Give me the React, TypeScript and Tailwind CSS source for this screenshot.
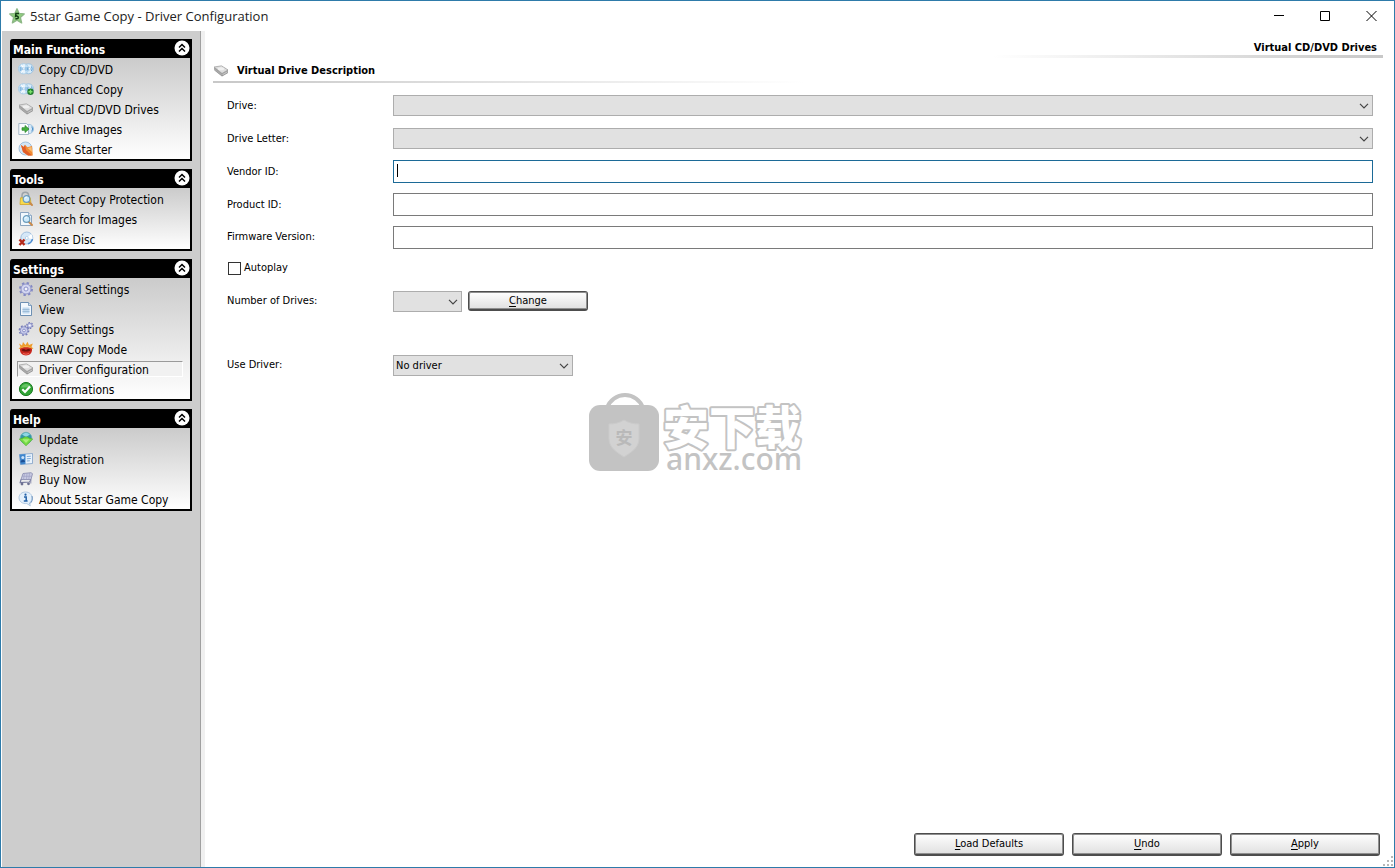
import { ReactNode, SelectHTMLAttributes } from "react";

type MenuItem = {
  label: string;
  icon: ReactNode;
  active?: boolean;
};

type MenuGroup = {
  title: string;
  items: MenuItem[];
};

function Icon({ children }: { children: ReactNode }) {
  return (
    <svg viewBox="0 0 16 16" className="h-4 w-4 shrink-0" aria-hidden="true">
      {children}
    </svg>
  );
}

function StarIcon() {
  return (
    <Icon>
      <path d="M8 .8l2 4.600 5.200.5-3.900 3.500 1.300 5.400L8 12.200l-4.600 2.600 1.300-5.400L.8 5.900 6 5.400z" fill="#8fd07c" stroke="#8db886" strokeWidth="1.400" strokeLinejoin="round" />
      <path d="M10 5.600H6.900L6.600 8.300c1.300-.5 2.700-.2 2.700 1.100s-1.400 1.700-2.900 1.100" fill="none" stroke="#123d14" strokeWidth="1.500" />
    </Icon>
  );
}

function DiscPair() {
  return (
    <>
      <circle cx="10.500" cy="7.800" r="5" fill="#d9ecf9" stroke="#8fbce0" strokeWidth=".8" />
      <circle cx="5.500" cy="7.800" r="5.200" fill="#c3e0f5" stroke="#a3c9e4" strokeWidth=".7" />
      <path d="M3.500 3.800l1.500 3M6 3.200v3.500M3.500 11.800L5 9M6 12.200V9" stroke="#fff" strokeWidth="1.200" />
      <path d="M2.300 6v4M4 6.300v3M8 6v3.800" stroke="#6eaadb" strokeWidth=".9" />
      <path d="M9.800 6.300v3M13.500 5.500a4.500 4.500 0 0 1 0 4.600" fill="none" stroke="#4c8fca" strokeWidth=".9" />
      <circle cx="5.800" cy="7.800" r="1.100" fill="#fff" stroke="#8fbce0" strokeWidth=".5" />
      <circle cx="11.500" cy="7.800" r="1.100" fill="#fff" stroke="#7fb2d8" strokeWidth=".5" />
    </>
  );
}

function CopyDiscIcon() {
  return (
    <Icon>
      <DiscPair />
    </Icon>
  );
}

function EnhancedCopyIcon() {
  return (
    <Icon>
      <DiscPair />
      <circle cx="12.500" cy="10.800" r="3.200" fill="#1f7a2c" />
      <path d="M12.500 8.800v4M10.500 10.800h4" stroke="#7be06a" strokeWidth="1.400" />
    </Icon>
  );
}

function DriveIcon() {
  return (
    <Icon>
      <path d="M1 4.300l7.500-1.300 6.500 4v3l-6 3.500L1.500 7.500z" fill="#8c8c8c" />
      <path d="M1 4l7.500-1.200L15 6.900l-6 3.500z" fill="#dedede" stroke="#a2a2a2" strokeWidth=".7" strokeLinejoin="round" />
      <path d="M1.200 4.800L9 11v2L2 7.500z" fill="#a9a9a9" />
      <path d="M9.300 11l5.300-3.100v1.700l-5.300 3z" fill="#c4c4c4" />
      <ellipse cx="8" cy="5.800" rx="3.200" ry="1.500" fill="#f0f0f0" />
    </Icon>
  );
}

function ArchiveIcon() {
  return (
    <Icon>
      <circle cx="11" cy="8" r="4.600" fill="#d7e9f7" stroke="#8fb9d8" strokeWidth=".8" />
      <path d="M.8 2.500h7.700l2 2v9H.8z" fill="#fbfdff" stroke="#93a9bd" strokeWidth=".8" />
      <path d="M4 6.700h3V4.500L11 8l-4 3.500V9.300H4z" fill="#45b13c" stroke="#2b8429" strokeWidth=".7" />
      <path d="M13.800 5.500a4.500 4.500 0 0 1 0 5" fill="none" stroke="#4c8fca" />
    </Icon>
  );
}

function GameIcon() {
  return (
    <Icon>
      <circle cx="7.500" cy="7.500" r="6.500" fill="#d3e6f6" stroke="#90b3d2" strokeWidth=".8" />
      <path d="M3 4l2.800 2L7 3.800 9.400 6.200 14 5l.8 9.500H10L5 11z" fill="#f08a33" />
      <path d="M3 4l2.800 2L7 3.800l1 5.200L14 14.500H10L5 11z" fill="#e15d28" />
      <path d="M9.500 7l4-1 .5 5z" fill="#f9bf74" />
    </Icon>
  );
}

function Magnifier() {
  return (
    <>
      <path d="M10.500 10.500l3.500 3.500" stroke="#c98a4b" strokeWidth="2" strokeLinecap="round" />
      <circle cx="8.500" cy="8" r="3.300" fill="#cdeafb" stroke="#6c9dbd" strokeWidth="1.200" />
      <path d="M7 7.500a1.800 1.800 0 0 1 1.800-1.400" fill="none" stroke="#fff" />
    </>
  );
}

function DetectIcon() {
  return (
    <Icon>
      <path d="M4 7V4.500a3.300 3.300 0 0 1 6.600 0V7" fill="none" stroke="#9ba3a8" strokeWidth="1.500" />
      <path d="M2.500 6.800h9.800l.8 6.700H2z" fill="#f8da4d" stroke="#d3a728" strokeWidth=".8" />
      <Magnifier />
    </Icon>
  );
}

function SearchImageIcon() {
  return (
    <Icon>
      <path d="M2.500 1.500h8l3 3v10h-11z" fill="#f2f8fd" stroke="#7f9cba" strokeWidth=".9" />
      <path d="M10.500 1.500v3h3" fill="#d5e4f1" stroke="#7f9cba" strokeWidth=".7" />
      <Magnifier />
    </Icon>
  );
}

function EraseIcon() {
  return (
    <Icon>
      <circle cx="8.800" cy="7" r="6" fill="#d6e8f8" stroke="#8fb3d8" strokeWidth=".8" />
      <path d="M8.800 7l4.500-4a6 6 0 0 1 1.200 5z" fill="#fff" />
      <path d="M10 12.700a6 6 0 0 0 4.500-4.500" fill="none" stroke="#4f8dd0" strokeWidth="1.500" />
      <circle cx="8.800" cy="7" r="1.500" fill="#fff" stroke="#9dbfdf" strokeWidth=".6" />
      <path d="M1.500 8.500l5 5.500M6.500 8.500l-5 5.500" stroke="#b52a1b" strokeWidth="2.400" />
    </Icon>
  );
}

function GearIcon() {
  return (
    <Icon>
      <circle cx="8" cy="8" r="6" fill="none" stroke="#8288c4" strokeWidth="2" strokeDasharray="2.350 2.350" />
      <circle cx="8" cy="8" r="5" fill="#d3d6f1" stroke="#8a8fc6" strokeWidth=".9" />
      <circle cx="8" cy="8" r="2" fill="#f4f4fb" stroke="#8288c4" strokeWidth=".9" />
    </Icon>
  );
}

function GearsIcon() {
  return (
    <Icon>
      <circle cx="6" cy="9.500" r="4.600" fill="none" stroke="#777dba" strokeWidth="1.600" strokeDasharray="1.800 1.800" />
      <circle cx="6" cy="9.500" r="3.800" fill="#c9cdec" stroke="#8086c0" strokeWidth=".8" />
      <circle cx="6" cy="9.500" r="1.400" fill="#f1f1fa" stroke="#777dba" strokeWidth=".8" />
      <circle cx="11.800" cy="4.500" r="2.900" fill="none" stroke="#777dba" strokeWidth="1.400" strokeDasharray="1.500 1.500" />
      <circle cx="11.800" cy="4.500" r="2.300" fill="#c9cdec" stroke="#8086c0" strokeWidth=".8" />
      <circle cx="11.800" cy="4.500" r=".8" fill="#fff" />
    </Icon>
  );
}

function PageIcon() {
  return (
    <Icon>
      <path d="M2.500 1.500h8l3 3v10h-11z" fill="#f3f8fd" stroke="#6d8fb3" strokeWidth="1" />
      <path d="M10.500 1.500v3h3" fill="#cfdfee" stroke="#6d8fb3" strokeWidth=".8" />
      <path d="M4.500 6.500h7v6h-7z" fill="#c1d9ee" />
      <path d="M4.500 8.500h7M4.500 10.500h7" stroke="#8fb0d0" strokeWidth=".7" />
    </Icon>
  );
}

function RawIcon() {
  return (
    <Icon>
      <path d="M1 2.500l3 2L5 1l2.500 3L9.500.8 11 4l3.800-1.500L13.500 6l2 1.500-2.500.8H3L.5 7.500l2-1.500z" fill="#ee9c2d" />
      <path d="M3.500 6.500q4.500-3 9 0v2h-9z" fill="#f3bd55" />
      <path d="M2 8c2-2.200 10-2.200 12 0 .5 3.700-2.500 6.500-6 6.500S1.500 11.700 2 8z" fill="#c9281e" />
      <path d="M3.500 9c1.500-1.500 3-1 4.500 0 1.500-1 3-1.500 4.500 0-1 2-8 2-9 0z" fill="#6d120d" />
      <path d="M5 12.500q3 1.500 6 0" fill="none" stroke="#ef695b" />
    </Icon>
  );
}

function CheckIcon() {
  return (
    <Icon>
      <circle cx="8" cy="8" r="6.600" fill="#32a436" stroke="#1d7d25" strokeWidth="1" />
      <path d="M3 6.500a5.300 5.300 0 0 1 10 0c-3-1-7 .5-10 0z" fill="#66c564" />
      <path d="M4.300 8.300l2.700 2.700 5-5.500" fill="none" stroke="#fff" strokeWidth="2.200" />
    </Icon>
  );
}

function UpdateIcon() {
  return (
    <Icon>
      <circle cx="8" cy="7" r="5.800" fill="#3697a8" stroke="#64aeb6" strokeWidth=".6" />
      <path d="M4 3.500q4-3.500 8 0L8 6z" fill="#8fd6e4" />
      <path d="M1.300 8l4-1 1-1h3.400l1 1 4 1L8 14.800z" fill="#76dc45" stroke="#4cae2e" strokeWidth=".7" />
      <path d="M4.500 8.200h7L8 12z" fill="#a9f07a" />
    </Icon>
  );
}

function RegistrationIcon() {
  return (
    <Icon>
      <path d="M1.500 3.500l13-1v10l-12 1z" fill="#eaf3fc" stroke="#7f9fc6" strokeWidth=".8" />
      <path d="M1.500 3.500l6-.5v10l-5 .5z" fill="#3f86cd" />
      <circle cx="4.800" cy="6.500" r="1.500" fill="#cfe3f7" />
      <path d="M2.500 11.500c0-3.500 4.500-3.500 4.500-.4z" fill="#1c4f95" />
      <path d="M8.800 5.500l4-.3M8.800 7.800l4-.3M8.800 10l3-.2" stroke="#6f9fd3" strokeWidth=".9" />
    </Icon>
  );
}

function CartIcon() {
  return (
    <Icon>
      <path d="M5 2.500l8-.8 1.500 1-1.500 5.800H3z" fill="#c8cae2" stroke="#8488ac" strokeWidth=".8" />
      <path d="M6.500 2.500L5.500 8.300M9 2.300l-.5 6M11.500 2l-.7 6.300M4.300 5.300h9.400" stroke="#9ea1c4" strokeWidth=".7" />
      <path d="M3 8.500l-.8 3 9.300-.5 1.500-2.500" fill="none" stroke="#777b9f" strokeWidth="1.200" />
      <circle cx="4" cy="13" r="1.400" fill="#6e7192" />
      <circle cx="10.500" cy="12.800" r="1.400" fill="#6e7192" />
      <path d="M12.800 8.500v4" stroke="#8c8fb0" strokeWidth="1" />
    </Icon>
  );
}

function AboutIcon() {
  return (
    <Icon>
      <path d="M7.500 1C11.500 1 14 3.500 14 6.800c0 2.200-1 3.900-2.500 5l.8 3-3.500-2.300C4.500 13 1 10.500 1 6.800 1 3.500 3.800 1 7.500 1z" fill="#e4f0fb" stroke="#a9c3de" strokeWidth=".9" />
      <path d="M12 12.500c2.300-1.800 2.800-4.500 2-7.500" fill="none" stroke="#6d94bf" strokeWidth="1" />
      <circle cx="7.500" cy="3.700" r="1.100" fill="#2361a8" />
      <path d="M6 6h2.200v4M5.800 10h3.800" fill="none" stroke="#2361a8" strokeWidth="1.500" />
    </Icon>
  );
}

const menu: MenuGroup[] = [
  {
    title: "Main Functions",
    items: [
      { label: "Copy CD/DVD", icon: <CopyDiscIcon /> },
      { label: "Enhanced Copy", icon: <EnhancedCopyIcon /> },
      { label: "Virtual CD/DVD Drives", icon: <DriveIcon /> },
      { label: "Archive Images", icon: <ArchiveIcon /> },
      { label: "Game Starter", icon: <GameIcon /> },
    ],
  },
  {
    title: "Tools",
    items: [
      { label: "Detect Copy Protection", icon: <DetectIcon /> },
      { label: "Search for Images", icon: <SearchImageIcon /> },
      { label: "Erase Disc", icon: <EraseIcon /> },
    ],
  },
  {
    title: "Settings",
    items: [
      { label: "General Settings", icon: <GearIcon /> },
      { label: "View", icon: <PageIcon /> },
      { label: "Copy Settings", icon: <GearsIcon /> },
      { label: "RAW Copy Mode", icon: <RawIcon /> },
      { label: "Driver Configuration", icon: <DriveIcon />, active: true },
      { label: "Confirmations", icon: <CheckIcon /> },
    ],
  },
  {
    title: "Help",
    items: [
      { label: "Update", icon: <UpdateIcon /> },
      { label: "Registration", icon: <RegistrationIcon /> },
      { label: "Buy Now", icon: <CartIcon /> },
      { label: "About 5star Game Copy", icon: <AboutIcon /> },
    ],
  },
];

function TitleBar() {
  return (
    <header className="flex h-[30px] shrink-0 items-center bg-white pl-2">
      <StarIcon />
      <h1 className="ml-[5px] flex-1 font-['Open_Sans',sans-serif] text-[13px] text-[#222]">
        5star Game Copy - Driver Configuration
      </h1>
      <button type="button" aria-label="Minimize" className="flex h-[30px] w-[46px] items-center justify-center">
        <svg viewBox="0 0 11 11" className="h-[11px] w-[11px]" aria-hidden="true">
          <path d="M0 4.500h10" stroke="#000" />
        </svg>
      </button>
      <button type="button" aria-label="Maximize" className="flex h-[30px] w-[46px] items-center justify-center">
        <svg viewBox="0 0 11 11" className="h-[11px] w-[11px]" aria-hidden="true">
          <path d="M.5.5h9v9h-9z" fill="none" stroke="#000" />
        </svg>
      </button>
      <button type="button" aria-label="Close" className="flex h-[30px] w-[46px] items-center justify-center">
        <svg viewBox="0 0 11 11" className="h-[11px] w-[11px]" aria-hidden="true">
          <path d="M.5 0L10.500 10M10.500 0L.5 10" stroke="#000" />
        </svg>
      </button>
    </header>
  );
}

function MenuPanel({ group }: { group: MenuGroup }) {
  return (
    <section className="rounded-tl-[3px] border-2 border-t-0 border-black bg-black">
      <div className="flex h-[19px] items-start justify-between pt-px pl-px">
        <h2 className="text-[12px] leading-5 font-bold text-white">{group.title}</h2>
        <button type="button" aria-label={`Collapse ${group.title}`} className="h-4 w-4">
          <svg viewBox="0 0 16 16" className="h-4 w-4" aria-hidden="true">
            <circle cx="8" cy="8" r="7.500" fill="#fff" />
            <path d="M5 7.500l3-3 3 3M5 11.500l3-3 3 3" fill="none" stroke="#000" strokeWidth="1.500" />
          </svg>
        </button>
      </div>
      <ul className="bg-linear-to-b from-[#cbcbcb] to-white pt-px pr-[7px] pl-[5px]">
        {group.items.map((item) => (
          <li key={item.label} className="flex h-5 items-center">
            <a
              href="#"
              className={`flex h-4 flex-1 items-center gap-[5px] border text-[12px] leading-4 whitespace-nowrap text-black ${
                item.active ? "border-t-[#9a9a9a] border-r-white border-b-white border-l-[#9a9a9a] bg-[#f1f1f1]" : "border-transparent"
              }`}
            >
              {item.icon}
              <span className="pt-px">{item.label}</span>
            </a>
          </li>
        ))}
      </ul>
    </section>
  );
}

function FormRow({ label, htmlFor, tall, children }: { label: string; htmlFor: string; tall?: boolean; children: ReactNode }) {
  return (
    <div className={`flex items-center ${tall ? "h-[33px]" : "h-8"}`}>
      <label htmlFor={htmlFor} className="w-[166px] shrink-0">
        {label}
      </label>
      {children}
    </div>
  );
}

function Select({ className, children, ...props }: SelectHTMLAttributes<HTMLSelectElement>) {
  return (
    <div className={`relative ${className}`}>
      <select {...props} className="block h-[21px] w-full appearance-none border border-[#adadad] bg-[#e1e1e1] pt-0.5 pr-5 pl-0.5 text-black">
        {children}
      </select>
      <svg viewBox="0 0 10 6" className="pointer-events-none absolute top-2 right-1 h-[6px] w-[10px]" aria-hidden="true">
        <path d="M1 .8l4 4 4-4" fill="none" stroke="#444" strokeWidth="1.200" />
      </svg>
    </div>
  );
}

const inputClass = "h-[23px] w-full border bg-white px-[3px] text-black outline-none";

function PushButton({ label, className }: { label: string; className: string }) {
  return (
    <button
      type="button"
      className={`rounded-[3px] border border-b-2 border-[#4d4d4d] bg-linear-to-b from-white to-[#e0e0e0] text-black inset-ring inset-ring-[#8f8f8f] ${className}`}
    >
      <span className="underline underline-offset-2">{label[0]}</span>
      {label.slice(1)}
    </button>
  );
}

function Watermark() {
  return (
    <div className="pointer-events-none absolute inset-0 flex items-center justify-center pr-1 pb-1">
      <svg viewBox="0 0 214 80" className="h-20 w-[214px] overflow-visible" aria-hidden="true">
        <path d="M18 16a19 19 0 0 1 36 0" fill="none" stroke="#c3c3c3" strokeWidth="4" />
        <rect x="0" y="13" width="70" height="66" rx="11" fill="#c3c3c3" />
        <path d="M35 28c5 3 10 4 15 4v15c0 8-7 13-15 18-8-5-15-10-15-18V32c5 0 10-1 15-4z" fill="#d2d2d2" stroke="#cbcbcb" />
        <text x="35" y="52" textAnchor="middle" fontSize="17" fontWeight="700" fill="#b9b9b9" fontFamily="'Noto Sans CJK SC', sans-serif">
          安
        </text>
        <text
          x="74"
          y="52"
          fontSize="46"
          fontWeight="900"
          fill="#fff"
          stroke="#c3c3c3"
          strokeWidth="4"
          strokeLinejoin="round"
          paintOrder="stroke"
          fontFamily="'Noto Sans CJK SC', sans-serif"
        >
          安下载
        </text>
        <text x="77" y="78" fontSize="30" fontWeight="500" fill="#c3c3c3" fontFamily="'Noto Sans', sans-serif">
          anxz.com
        </text>
      </svg>
    </div>
  );
}

export default function App() {
  return (
    <div className="relative flex min-h-screen flex-col border border-[#2e7baa] bg-white font-['DejaVu_Sans_Condensed','DejaVu_Sans',sans-serif] text-[11px] leading-4 text-black">
      <TitleBar />
      <div className="flex flex-1 pl-px">
        <nav className="flex w-[199px] shrink-0 flex-col gap-2 border-r border-[#a0a0a0] bg-[#cdcdcd] pt-2 pr-2 pl-2">
          {menu.map((group) => (
            <MenuPanel key={group.title} group={group} />
          ))}
        </nav>
        <main className="flex min-w-0 flex-1 flex-col border-l-4 border-[#f0f0f0] pl-2">
          <div className="mr-[11px] flex flex-col items-end pt-[9px]">
            <p className="pr-1.5 leading-[15px] font-bold">Virtual CD/DVD Drives</p>
            <div className="h-[3px] w-1/3 bg-linear-to-r from-white to-[#c8c8c8]" />
          </div>
          <div className="flex items-center gap-2 pt-[5px]">
            <DriveIcon />
            <h2 className="font-bold">Virtual Drive Description</h2>
          </div>
          <div className="mt-0.5 h-0.5 w-1/2 bg-linear-to-r from-[#c8c8c8] to-white" />

          <form className="mt-[6px] mr-[21px] ml-[14px]">
            <FormRow label="Drive:" htmlFor="drive" tall>
              <Select id="drive" className="flex-1" />
            </FormRow>
            <FormRow label="Drive Letter:" htmlFor="letter" tall>
              <Select id="letter" className="flex-1" />
            </FormRow>
            <FormRow label="Vendor ID:" htmlFor="vendor" tall>
              <div className="relative flex flex-1">
                <input id="vendor" type="text" className={`${inputClass} border-[#1c6a97]`} />
                <span className="absolute top-1 left-1 h-[13px] w-px bg-black" />
              </div>
            </FormRow>
            <FormRow label="Product ID:" htmlFor="product" tall>
              <input id="product" type="text" className={`${inputClass} border-[#7a7a7a]`} />
            </FormRow>
            <FormRow label="Firmware Version:" htmlFor="firmware">
              <input id="firmware" type="text" className={`${inputClass} border-[#7a7a7a]`} />
            </FormRow>
            <div className="flex h-8 items-center gap-[3px] pb-0.5 pl-px">
              <input id="autoplay" type="checkbox" className="h-[13px] w-[13px] appearance-none border border-[#333] bg-white checked:bg-[#333]" />
              <label htmlFor="autoplay">Autoplay</label>
            </div>
            <FormRow label="Number of Drives:" htmlFor="count">
              <Select id="count" className="w-[69px]" />
              <PushButton label="Change" className="ml-1.5 h-5 w-[120px] leading-4" />
            </FormRow>
            <div className="h-8" />
            <FormRow label="Use Driver:" htmlFor="driver">
              <Select id="driver" className="w-[180px]">
                <option>No driver</option>
              </Select>
            </FormRow>
          </form>

          <div className="mt-auto mr-[14px] mb-[11px] flex justify-end gap-2">
            <PushButton label="Load Defaults" className="h-[23px] w-[150px]" />
            <PushButton label="Undo" className="h-[23px] w-[150px]" />
            <PushButton label="Apply" className="h-[23px] w-[150px]" />
          </div>
        </main>
      </div>
      <Watermark />
      <svg viewBox="0 0 10 10" className="absolute right-px bottom-px h-[10px] w-[10px]" aria-hidden="true">
        <path d="M8 0h2v2H8zM4 4h2v2H4zM8 4h2v2H8zM0 8h2v2H0zM4 8h2v2H4zM8 8h2v2H8z" fill="#b8b8b8" />
      </svg>
    </div>
  );
}
